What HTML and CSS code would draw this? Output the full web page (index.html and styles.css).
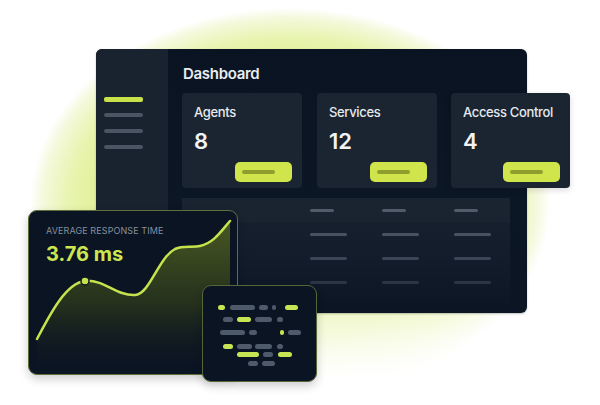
FILE: index.html
```html
<!DOCTYPE html>
<html lang="en">
<head>
<meta charset="utf-8">
<title>Dashboard</title>
<link rel="stylesheet" href="styles.css">
</head>
<body>
<div class="stage">
  <div class="glow"></div>
  <div class="window">
    <aside class="sidebar">
      <span class="nav-line active"></span>
      <span class="nav-line"></span>
      <span class="nav-line"></span>
      <span class="nav-line"></span>
    </aside>
    <main class="content">
      <h1 class="title">Dashboard</h1>
      <div class="cards">
        <div class="card">
          <div class="card-label">Agents</div>
          <div class="card-value">8</div>
          <div class="card-btn"><span></span></div>
        </div>
        <div class="card">
          <div class="card-label">Services</div>
          <div class="card-value">12</div>
          <div class="card-btn"><span></span></div>
        </div>
        <div class="card">
          <div class="card-label">Access Control</div>
          <div class="card-value">4</div>
          <div class="card-btn"><span></span></div>
        </div>
      </div>
      <div class="table">
        <div class="trow thead"><span class="dash short"></span><span class="dash short"></span><span class="dash short"></span></div>
        <div class="trow r1"><span class="dash"></span><span class="dash"></span><span class="dash"></span></div>
        <div class="trow r2"><span class="dash"></span><span class="dash"></span><span class="dash"></span></div>
        <div class="trow r3"><span class="dash"></span><span class="dash"></span><span class="dash"></span></div>
      </div>
    </main>
  </div>

  <div class="chart-card">
    <svg class="chart" width="210" height="165" viewBox="0 0 210 165">
      <defs>
        <linearGradient id="fillg" x1="0" y1="0" x2="0" y2="1">
          <stop offset="0" stop-color="#4a5c22" stop-opacity="0.95"/>
          <stop offset="0.55" stop-color="#27331c" stop-opacity="0.9"/>
          <stop offset="1" stop-color="#0c1523" stop-opacity="0"/>
        </linearGradient>
      </defs>
      <path d="M9,129 C22,104 38,73 57,71 C76,69 88,86 107,85 C122,84 130,48 147,39 C156,35 164,38 172,36 C186,33 194,20 202,11 L202,165 L9,165 Z" fill="url(#fillg)"/>
      <path d="M9,129 C22,104 38,73 57,71 C76,69 88,86 107,85 C122,84 130,48 147,39 C156,35 164,38 172,36 C186,33 194,20 202,11" fill="none" stroke="#c6e34e" stroke-width="2.5" stroke-linecap="round"/>
      <circle cx="57" cy="71" r="4" fill="#c6e34e" stroke="#0c1523" stroke-width="1.5"/>
    </svg>
    <div class="chart-label">Average Response Time</div>
    <div class="chart-value">3.76 ms</div>
  </div>

  <div class="code-card">
    <svg width="115" height="97" viewBox="0 0 115 97">
      <g fill="#4e5a6a">
        <rect x="28" y="20" width="25" height="5" rx="2.5"/>
        <rect x="57" y="20" width="9" height="5" rx="2.5"/>
        <rect x="70" y="20" width="4" height="5" rx="2"/>
        <rect x="21" y="32" width="10" height="5" rx="2.5"/>
        <rect x="53" y="32" width="17" height="5" rx="2.5"/>
        <rect x="75" y="32" width="6" height="5" rx="2.5"/>
        <rect x="18" y="45" width="25" height="5" rx="2.5"/>
        <rect x="47" y="45" width="8" height="5" rx="2.5"/>
        <rect x="86" y="45" width="13" height="5" rx="2.5"/>
        <rect x="35" y="59" width="15" height="5" rx="2.5"/>
        <rect x="53" y="59" width="17" height="5" rx="2.5"/>
        <rect x="75" y="59" width="6" height="5" rx="2.5"/>
        <rect x="61" y="67" width="10" height="5" rx="2.5"/>
        <rect x="46" y="76" width="10" height="5" rx="2.5"/>
        <rect x="60" y="76" width="13" height="5" rx="2.5"/>
      </g>
      <g fill="#c6e453">
        <rect x="16" y="20" width="7" height="5" rx="2.5"/>
        <rect x="83" y="20" width="13" height="5" rx="2.5"/>
        <rect x="35" y="32" width="14" height="5" rx="2.5"/>
        <rect x="78" y="45" width="4" height="5" rx="2"/>
        <rect x="21" y="59" width="10" height="5" rx="2.5"/>
        <rect x="35" y="67" width="22" height="5" rx="2.5"/>
        <rect x="76" y="67" width="14" height="5" rx="2.5"/>
      </g>
    </svg>
  </div>
</div>
</body>
</html>
```

FILE: styles.css
```css
* { box-sizing: border-box; margin: 0; padding: 0; }

html, body {
  width: 600px;
  height: 405px;
  overflow: hidden;
  background: #ffffff;
}

body {
  font-family: Inter, "Noto Sans", sans-serif;
}

.stage {
  position: relative;
  width: 600px;
  height: 405px;
}

/* decorative lime glow behind the dashboard */
.glow {
  position: absolute;
  left: 30px;
  top: 8px;
  width: 520px;
  height: 390px;
  border-radius: 50%;
  background: radial-gradient(ellipse closest-side at 50% 50%,
    #dbee84 0%,
    #dfef90 70%,
    #e8f4b0 85%,
    #f4f9dc 95%,
    rgba(255, 255, 255, 0) 100%);
  -webkit-mask-image: linear-gradient(180deg, #000 0%, #000 62%, rgba(0,0,0,0.35) 82%, transparent 95%);
  mask-image: linear-gradient(180deg, #000 0%, #000 62%, rgba(0,0,0,0.35) 82%, transparent 95%);
}

/* main window */
.window {
  position: absolute;
  left: 96px;
  top: 49px;
  width: 431px;
  height: 264px;
  display: flex;
  border-radius: 6px;
  background: linear-gradient(180deg, #0a1321 0%, #0c1726 60%, #0b1523 100%);
  box-shadow: 0 1px 2px rgba(0, 0, 0, 0.25);
}

.sidebar {
  width: 72px;
  flex: none;
  display: flex;
  flex-direction: column;
  gap: 11.7px;
  padding: 48px 0 0 8px;
  background: #19232f;
  border-radius: 6px 0 0 6px;
}

.nav-line {
  display: block;
  width: 39px;
  height: 4px;
  border-radius: 2px;
  background: #4a5462;
}

.nav-line.active {
  background: #c9e24a;
  height: 4.5px;
}

.content {
  flex: 1;
  display: flex;
  flex-direction: column;
  padding: 16px 0 0 14px;
  min-width: 0;
}

.title {
  font-size: 15px;
  font-weight: 600;
  letter-spacing: -0.3px;
  color: #e9edf1;
  line-height: 18px;
  padding-left: 1px;
}

.cards {
  display: flex;
  gap: 15px;
  margin-top: 10px;
}

.card {
  width: 120px;
  height: 95px;
  flex: none;
  display: flex;
  flex-direction: column;
  padding: 11px 10px 6px 12px;
  background: #1b2531;
  border-radius: 4px;
}

.card:last-child {
  width: 119px;
  margin-left: -1px;
  box-shadow: 0 2px 6px rgba(0, 0, 0, 0.15);
}

.card-label {
  font-size: 13px;
  font-weight: 500;
  letter-spacing: -0.35px;
  color: #e6eaee;
  line-height: 16px;
}

.card-value {
  font-size: 22px;
  font-weight: 600;
  color: #f1f3f5;
  line-height: 26px;
  margin-top: 8px;
}

.card-btn {
  margin-top: auto;
  align-self: flex-end;
  width: 57px;
  height: 20px;
  border-radius: 5px;
  background: #cfe54b;
  display: flex;
  align-items: center;
  padding-left: 7px;
}

.card-btn span {
  display: block;
  width: 33px;
  height: 3.5px;
  border-radius: 2px;
  background: #8e9e2c;
}

/* table */
.table {
  width: 328px;
  margin-top: 10px;
  display: flex;
  flex-direction: column;
  padding-bottom: 10px;
  background: linear-gradient(180deg, #172130 0%, #131d2b 50%, #0c1624 100%);
  border-radius: 2px;
}

.trow {
  height: 24px;
  display: flex;
  align-items: center;
  padding-left: 128px;
}

.thead {
  background: #1a2431;
}

.dash {
  display: block;
  flex: none;
  width: 37px;
  height: 3px;
  border-radius: 2px;
  margin-right: 35px;
  background: #4b5665;
}

.dash.short {
  width: 24px;
  margin-right: 48px;
  background: #515c6b;
}

.r1 .dash { background: #485362; }
.r2 .dash { background: #3a4555; }
.r3 .dash { background: #2b3645; }

/* chart card */
.chart-card {
  position: absolute;
  left: 28px;
  top: 210px;
  width: 210px;
  height: 165px;
  border-radius: 9px;
  background: #0b1422;
  border: 1.5px solid #5f6f3c;
  overflow: hidden;
  padding: 14px 0 0 17px;
  box-shadow: 0 4px 10px rgba(0, 0, 0, 0.2);
}

.chart {
  position: absolute;
  left: -1.5px;
  top: -1.5px;
}

.chart-label {
  position: relative;
  font-size: 9px;
  font-weight: 400;
  letter-spacing: 0.1px;
  text-transform: uppercase;
  color: #86909d;
  line-height: 11px;
}

.chart-value {
  position: relative;
  font-size: 20px;
  font-weight: 700;
  color: #cde64f;
  line-height: 24px;
  margin-top: 6px;
}

/* code card */
.code-card {
  position: absolute;
  left: 202px;
  top: 285px;
  width: 115px;
  height: 97px;
  border-radius: 9px;
  background: #0b1422;
  border: 1.5px solid #56663a;
  overflow: hidden;
  box-shadow: 0 4px 10px rgba(0, 0, 0, 0.2);
}

.code-card svg {
  display: block;
  margin: -1.5px 0 0 -1.5px;
}
```
